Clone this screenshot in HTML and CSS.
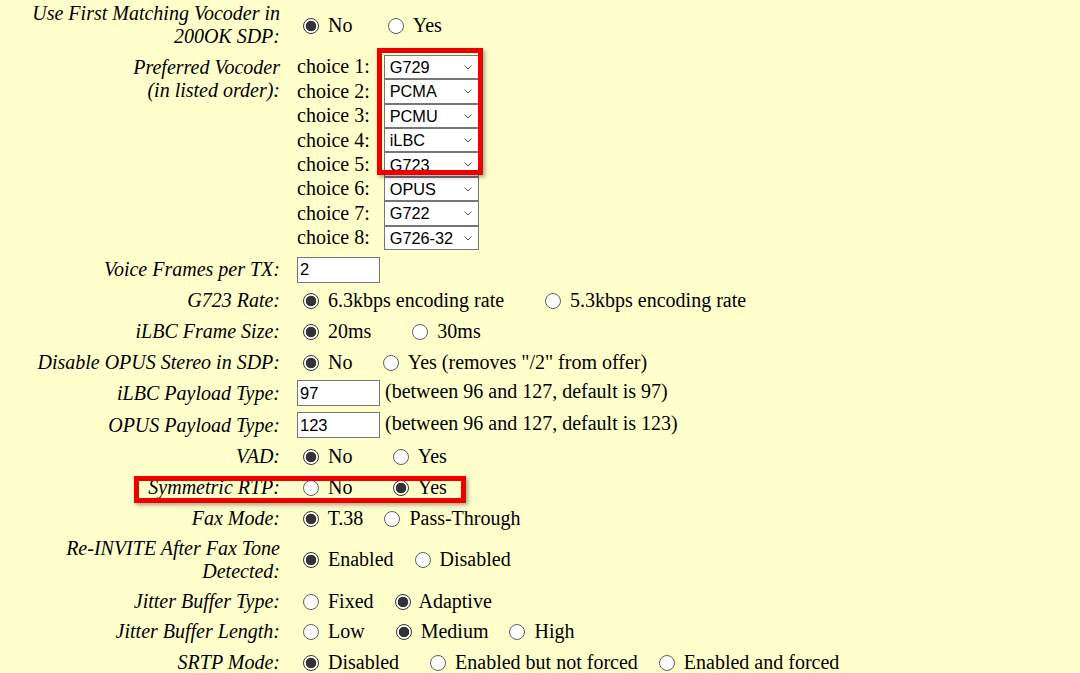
FILE: index.html
```html
<!DOCTYPE html>
<html>
<head>
<meta charset="utf-8">
<title>Vocoder settings</title>
<link rel="stylesheet" href="styles.css">
</head>
<body>
<div class="page">
  <div class="form">
    <div class="row row-2l">
      <div class="lbl">Use First Matching Vocoder in 200OK SDP:</div>
      <div class="val"><label><input type="radio" class="rd" name="r1" checked> No</label>&nbsp;&nbsp;&nbsp;&nbsp;&nbsp; <label><input type="radio" class="rd" name="r1"> Yes</label></div>
    </div>
    <div class="row row-vocoder">
      <div class="lbl lbl-top">Preferred Vocoder<br>(in listed order):</div>
      <div class="choices">
        <span>choice 1:</span><span class="sel"><select><option>G729</option></select><svg class="chev" viewBox="0 0 8 5"><path d="M0.5 0.5 L4 4 L7.5 0.5"/></svg></span>
        <span>choice 2:</span><span class="sel"><select><option>PCMA</option></select><svg class="chev" viewBox="0 0 8 5"><path d="M0.5 0.5 L4 4 L7.5 0.5"/></svg></span>
        <span>choice 3:</span><span class="sel"><select><option>PCMU</option></select><svg class="chev" viewBox="0 0 8 5"><path d="M0.5 0.5 L4 4 L7.5 0.5"/></svg></span>
        <span>choice 4:</span><span class="sel"><select><option>iLBC</option></select><svg class="chev" viewBox="0 0 8 5"><path d="M0.5 0.5 L4 4 L7.5 0.5"/></svg></span>
        <span>choice 5:</span><span class="sel"><select><option>G723</option></select><svg class="chev" viewBox="0 0 8 5"><path d="M0.5 0.5 L4 4 L7.5 0.5"/></svg></span>
        <span>choice 6:</span><span class="sel"><select><option>OPUS</option></select><svg class="chev" viewBox="0 0 8 5"><path d="M0.5 0.5 L4 4 L7.5 0.5"/></svg></span>
        <span>choice 7:</span><span class="sel"><select><option>G722</option></select><svg class="chev" viewBox="0 0 8 5"><path d="M0.5 0.5 L4 4 L7.5 0.5"/></svg></span>
        <span>choice 8:</span><span class="sel"><select><option>G726-32</option></select><svg class="chev" viewBox="0 0 8 5"><path d="M0.5 0.5 L4 4 L7.5 0.5"/></svg></span>
      </div>
    </div>
    <div class="row">
      <div class="lbl">Voice Frames per TX:</div>
      <div class="val"><input type="text" class="txt" value="2"></div>
    </div>
    <div class="row">
      <div class="lbl">G723 Rate:</div>
      <div class="val"><label><input type="radio" class="rd" name="r2" checked> 6.3kbps encoding rate</label>&nbsp;&nbsp;&nbsp;&nbsp;&nbsp;&nbsp; <label><input type="radio" class="rd" name="r2"> 5.3kbps encoding rate</label></div>
    </div>
    <div class="row">
      <div class="lbl">iLBC Frame Size:</div>
      <div class="val"><label><input type="radio" class="rd" name="r3" checked> 20ms</label>&nbsp;&nbsp;&nbsp;&nbsp;&nbsp;&nbsp; <label><input type="radio" class="rd" name="r3"> 30ms</label></div>
    </div>
    <div class="row row-sm">
      <div class="lbl">Disable OPUS Stereo in SDP:</div>
      <div class="val"><label><input type="radio" class="rd" name="r4" checked> No</label>&nbsp;&nbsp;&nbsp;&nbsp; <label><input type="radio" class="rd" name="r4"> Yes (removes "/2" from offer)</label></div>
    </div>
    <div class="row row-lg">
      <div class="lbl">iLBC Payload Type:</div>
      <div class="val"><input type="text" class="txt" value="97"> (between 96 and 127, default is 97)</div>
    </div>
    <div class="row row-lg">
      <div class="lbl">OPUS Payload Type:</div>
      <div class="val"><input type="text" class="txt" value="123"> (between 96 and 127, default is 123)</div>
    </div>
    <div class="row">
      <div class="lbl">VAD:</div>
      <div class="val"><label><input type="radio" class="rd" name="r5" checked> No</label>&nbsp;&nbsp;&nbsp;&nbsp;&nbsp;&nbsp; <label><input type="radio" class="rd" name="r5"> Yes</label></div>
    </div>
    <div class="row">
      <div class="lbl">Symmetric RTP:</div>
      <div class="val"><label><input type="radio" class="rd" name="r6"> No</label>&nbsp;&nbsp;&nbsp;&nbsp;&nbsp;&nbsp; <label><input type="radio" class="rd" name="r6" checked> Yes</label></div>
    </div>
    <div class="row row-sm">
      <div class="lbl">Fax Mode:</div>
      <div class="val"><label><input type="radio" class="rd" name="r7" checked> T.38</label>&nbsp;&nbsp; <label><input type="radio" class="rd" name="r7"> Pass-Through</label></div>
    </div>
    <div class="row row-2l-lg">
      <div class="lbl">Re-INVITE After Fax Tone Detected:</div>
      <div class="val"><label><input type="radio" class="rd" name="r8" checked> Enabled</label>&nbsp;&nbsp; <label><input type="radio" class="rd" name="r8"> Disabled</label></div>
    </div>
    <div class="row row-sm">
      <div class="lbl">Jitter Buffer Type:</div>
      <div class="val"><label><input type="radio" class="rd" name="r9"> Fixed</label>&nbsp;&nbsp; <label><input type="radio" class="rd" name="r9" checked> Adaptive</label></div>
    </div>
    <div class="row">
      <div class="lbl">Jitter Buffer Length:</div>
      <div class="val"><label><input type="radio" class="rd" name="r10"> Low</label>&nbsp;&nbsp;&nbsp;&nbsp; <label><input type="radio" class="rd" name="r10" checked> Medium</label>&nbsp;&nbsp; <label><input type="radio" class="rd" name="r10"> High</label></div>
    </div>
    <div class="row row-sm">
      <div class="lbl">SRTP Mode:</div>
      <div class="val"><label><input type="radio" class="rd" name="r11" checked> Disabled</label>&nbsp;&nbsp;&nbsp;&nbsp; <label><input type="radio" class="rd" name="r11"> Enabled but not forced</label>&nbsp;&nbsp; <label><input type="radio" class="rd" name="r11"> Enabled and forced</label></div>
    </div>
  </div>
  <div class="mark mark-codecs"></div>
  <div class="mark mark-rtp"></div>
</div>
</body>
</html>
```
FILE: styles.css
```css
html, body {
  margin: 0;
  padding: 0;
  background: #ffffcc;
}
body {
  font-family: "Liberation Serif", "Times New Roman", serif;
  font-size: 20px;
  line-height: 23px;
  color: #000;
  overflow: hidden;
}
.page {
  position: relative;
  height: 673px;
  padding-top: 2px;
  box-sizing: border-box;
}
.row {
  display: grid;
  grid-template-columns: 280px 1fr;
  column-gap: 17px;
  align-items: center;
  height: 31px;
}
.row-sm { height: 30px; }
.row-lg { height: 32px; }
.row-2l { height: 46px; }
.row-2l-lg { height: 53px; }
.row-vocoder {
  height: 206px;
  align-items: start;
}
.lbl {
  font-style: italic;
  text-align: right;
  padding-left: 30px;
}
.lbl-top { padding-top: 7.5px; }
.val {
  white-space: nowrap;
}
.choices {
  display: grid;
  grid-template-columns: auto 95px;
  grid-auto-rows: 24.4px;
  column-gap: 14px;
  align-items: center;
  justify-content: start;
  padding-top: 6.8px;
}
.sel {
  position: relative;
  display: block;
  height: 24.4px;
}
.sel select {
  -webkit-appearance: none;
  appearance: none;
  display: block;
  width: 95px;
  height: 100%;
  box-sizing: border-box;
  margin: 0;
  border: 1px solid #767676;
  border-radius: 0;
  background: #fff;
  color: #000;
  font-family: "Liberation Sans", Arial, sans-serif;
  font-size: 16.3px;
  padding: 0 0 0 5px;
}
.chev {
  position: absolute;
  right: 7px;
  top: 10px;
  width: 8px;
  height: 5px;
  fill: none;
  stroke: #555;
  stroke-width: 1;
}
.txt {
  width: 83px;
  height: 26px;
  box-sizing: border-box;
  margin: 0;
  border: 1px solid #767676;
  padding: 0 2px;
  background: #fff;
  font-family: "Liberation Sans", Arial, sans-serif;
  font-size: 16.5px;
  color: #000;
  vertical-align: middle;
}
.rd {
  -webkit-appearance: none;
  appearance: none;
  width: 16px;
  height: 16px;
  box-sizing: border-box;
  margin: 0 4px 0 6px;
  border: 1px solid #5f5f5f;
  border-radius: 50%;
  background: #fff;
  vertical-align: -2px;
}
.rd:checked {
  border-color: #333;
  background: radial-gradient(circle, #333 0, #333 4.9px, #fff 5.6px);
}
.mark {
  position: absolute;
  box-sizing: border-box;
  border: 5px solid #ee0000;
  box-shadow: 2px 2px 4px rgba(0, 0, 0, 0.35);
}
.mark-codecs {
  left: 377px;
  top: 48px;
  width: 106px;
  height: 127px;
}
.mark-rtp {
  left: 134px;
  top: 476px;
  width: 332px;
  height: 27px;
}
```
